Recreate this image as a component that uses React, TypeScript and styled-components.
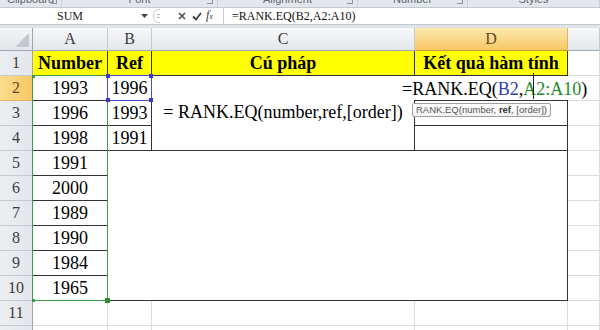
import React from 'react';
import styled, { createGlobalStyle } from 'styled-components';

type Line = 'grid' | 'dark';

const lineColor = (l: Line = 'grid') => (l === 'dark' ? '#333' : '#dadcdd');

const GlobalStyle = createGlobalStyle`
  html, body {
    margin: 0;
    padding: 0;
    background: #fff;
  }
  body {
    width: 600px;
    height: 330px;
    overflow: hidden;
    font-family: "Liberation Serif", serif;
  }
`;

const Window = styled.div`
  width: 600px;
  height: 330px;
  overflow: hidden;
  background: #dfe3e8;
  display: flex;
  flex-direction: column;
`;

const RibbonStrip = styled.div`
  flex: 0 0 7px;
  display: flex;
  overflow: hidden;
  background: #e3e7ec;
  border-bottom: 1px solid #c3c9d1;
`;

const RibbonGroup = styled.div<{ $w: number }>`
  flex: 0 0 ${p => p.$w}px;
  position: relative;
  display: flex;
  justify-content: center;
  border-right: 1px solid #c9ced5;
  box-sizing: border-box;
`;

const RibbonLabel = styled.span`
  font: 11px/12px "Liberation Sans", sans-serif;
  color: #5d6671;
  margin-top: -7px;
`;

const Launcher = styled.span`
  position: absolute;
  right: 4px;
  top: -3px;
  width: 5px;
  height: 6px;
  border-right: 1px solid #8a939e;
  border-bottom: 1px solid #8a939e;
`;

const FormulaBar = styled.div`
  flex: 0 0 16px;
  display: flex;
  align-items: stretch;
  background: #fff;
  border-bottom: 1px solid #c6cbd2;
`;

const NameBox = styled.div`
  flex: 0 0 150px;
  position: relative;
  display: flex;
  align-items: center;
  justify-content: center;
  padding-right: 10px;
  box-sizing: border-box;
  font: 12px/16px "Liberation Serif", serif;
  color: #222;
`;

const DropArrow = styled.svg`
  position: absolute;
  right: 2px;
  top: 6px;
`;

const Grip = styled.div`
  flex: 0 0 16px;
  display: flex;
  align-items: center;
  padding-left: 3px;
`;

const BarButtons = styled.div`
  flex: 0 0 54px;
  display: flex;
  align-items: center;
  padding-left: 5px;
  box-sizing: border-box;
`;

const BarButton = styled.span<{ $w?: number }>`
  flex: 0 0 ${p => p.$w ?? 15}px;
  display: flex;
  align-items: center;
  justify-content: center;
`;

const FxLabel = styled.span`
  font: italic 12px/14px "Liberation Serif", serif;
  color: #3a3a3a;
  margin-left: 2px;

  small {
    font-size: 8px;
  }
`;

const FormulaInput = styled.div`
  flex: 1;
  border-left: 1px solid #c6cbd2;
  padding-left: 8px;
  font: 12px/16px "Liberation Serif", serif;
  color: #111;
`;

const Sheet = styled.div`
  position: relative;
  margin-top: 3px;
  display: grid;
  grid-template-columns: 33px 75px 44px 263px 153px 1fr;
  grid-template-rows: 23px repeat(12, 25px);
  background: #fff;
`;

const Corner = styled.div`
  position: relative;
  background: linear-gradient(#f3f5f7, #e2e6ea);
  border-right: 1px solid #9ea7b1;
  border-bottom: 1px solid #9ea7b1;

  &::after {
    content: '';
    position: absolute;
    right: 3px;
    bottom: 3px;
    border-left: 14px solid transparent;
    border-bottom: 14px solid #c3c8ce;
  }
`;

const ColHead = styled.div<{ $active?: boolean }>`
  display: flex;
  align-items: center;
  justify-content: center;
  background: ${p =>
    p.$active ? 'linear-gradient(#fde9ae, #f7c764)' : 'linear-gradient(#f7f8fa, #e3e6ea)'};
  border-right: 1px solid ${p => (p.$active ? '#e0b45a' : '#c5cad1')};
  border-bottom: 1px solid ${p => (p.$active ? '#c99a3e' : '#9ea7b1')};
  font: 16px/20px "Liberation Serif", serif;
  color: ${p => (p.$active ? '#5e4a24' : '#3c3c3c')};
`;

const RowHead = styled.div<{ $active?: boolean }>`
  display: flex;
  align-items: center;
  justify-content: center;
  background: ${p =>
    p.$active ? 'linear-gradient(90deg, #fbdc8e, #f6c764)' : 'linear-gradient(90deg, #eceff2, #e2e6ea)'};
  border-right: 1px solid ${p => (p.$active ? '#c99a3e' : '#9ea7b1')};
  border-bottom: 1px solid ${p => (p.$active ? '#e0b45a' : '#c5cad1')};
  font: 16px/20px "Liberation Serif", serif;
  color: ${p => (p.$active ? '#5e4a24' : '#3c3c3c')};
`;

const Cell = styled.div<{
  $fill?: string;
  $bold?: boolean;
  $right?: Line;
  $bottom?: Line;
  $cols?: number;
  $rows?: number;
  $middle?: boolean;
}>`
  grid-column: span ${p => p.$cols ?? 1};
  grid-row: span ${p => p.$rows ?? 1};
  background: ${p => p.$fill ?? '#fff'};
  border-right: 1px solid ${p => lineColor(p.$right)};
  border-bottom: 1px solid ${p => lineColor(p.$bottom)};
  display: flex;
  align-items: ${p => (p.$middle ? 'center' : 'flex-end')};
  justify-content: center;
  font: ${p => (p.$bold ? 700 : 400)} 18px/21px "Liberation Serif", serif;
  color: #000;
  white-space: nowrap;
  overflow: hidden;
  padding-bottom: 1px;
  box-sizing: border-box;
`;

const RangeBox = styled.div<{ $color: string }>`
  position: absolute;
  border: 1px solid ${p => p.$color};
  box-sizing: border-box;
  pointer-events: none;
`;

const Handle = styled.span<{ $color: string; $size?: number }>`
  position: absolute;
  width: ${p => p.$size ?? 3}px;
  height: ${p => p.$size ?? 3}px;
  background: ${p => p.$color};
`;

const EditBox = styled.div`
  position: absolute;
  left: 400px;
  top: 48px;
  width: 186px;
  height: 24px;
  background: #fff;
  display: flex;
  align-items: flex-end;
  padding-left: 2px;
  box-sizing: border-box;
  font: 18px/21px "Liberation Serif", serif;
  color: #000;
  white-space: nowrap;
`;

const Ref = styled.span<{ $color: string }>`
  color: ${p => p.$color};
`;

const Caret = styled.span`
  position: relative;
  display: inline-block;
  width: 0;

  &::before {
    content: '';
    position: absolute;
    left: -3px;
    bottom: -4px;
    height: 26px;
    border-left: 1px solid #222;
  }
`;

const Tooltip = styled.div`
  position: absolute;
  left: 412px;
  top: 75px;
  height: 14px;
  padding: 0 3px;
  display: flex;
  align-items: center;
  background: linear-gradient(#ffffff, #f1f1f1);
  border: 1px solid #a0a0a0;
  border-radius: 2px;
  box-sizing: border-box;
  font: 9.5px/12px "Liberation Sans", sans-serif;
  color: #575757;
  white-space: nowrap;

  b {
    color: #333;
  }
`;

const ribbon = [
  { label: 'Clipboard', w: 62 },
  { label: 'Font', w: 156 },
  { label: 'Alignment', w: 140 },
  { label: 'Number', w: 110 },
  { label: 'Styles', w: 132 },
];

const numbers = ['1993', '1996', '1998', '1991', '2000', '1989', '1990', '1984', '1965'];
const refs = ['1996', '1993', '1991'];
const yellow = '#ffff00';

const App = () => {
  return (
    <>
      <GlobalStyle />
      <Window>
        <RibbonStrip>
          {ribbon.map(g => (
            <RibbonGroup key={g.label} $w={g.w}>
              <RibbonLabel>{g.label}</RibbonLabel>
              {g.label !== 'Styles' && <Launcher />}
            </RibbonGroup>
          ))}
        </RibbonStrip>

        <FormulaBar>
          <NameBox>
            SUM
            <DropArrow width="7" height="4" viewBox="0 0 7 4">
              <path d="M0 0 L7 0 L3.5 4 Z" fill="#444" />
            </DropArrow>
          </NameBox>
          <Grip>
            <svg width="10" height="14" viewBox="0 0 10 14">
              <path d="M7 0.5 C2 0.5 0.5 3 0.5 7 C0.5 11 2 13.5 7 13.5" fill="none" stroke="#c3c8ce" />
              <rect x="4" y="5" width="3" height="1" fill="#b5bbc2" />
              <rect x="4" y="8" width="3" height="1" fill="#b5bbc2" />
            </svg>
          </Grip>
          <BarButtons>
            <BarButton>
              <svg width="8" height="8" viewBox="0 0 8 8">
                <path d="M1 1 L7 7 M7 1 L1 7" stroke="#4d4d4d" strokeWidth="1.6" />
              </svg>
            </BarButton>
            <BarButton>
              <svg width="10" height="9" viewBox="0 0 10 9">
                <path d="M1 4.5 L4 7.5 L9 1" fill="none" stroke="#3d3d3d" strokeWidth="1.8" />
              </svg>
            </BarButton>
            <FxLabel>
              f<small>x</small>
            </FxLabel>
          </BarButtons>
          <FormulaInput>=RANK.EQ(B2,A2:A10)</FormulaInput>
        </FormulaBar>

        <Sheet>
          <Corner />
          <ColHead>A</ColHead>
          <ColHead>B</ColHead>
          <ColHead>C</ColHead>
          <ColHead $active>D</ColHead>
          <ColHead />

          <RowHead>1</RowHead>
          <Cell $fill={yellow} $bold $right="dark" $bottom="dark">Number</Cell>
          <Cell $fill={yellow} $bold $right="dark" $bottom="dark">Ref</Cell>
          <Cell $fill={yellow} $bold $right="dark" $bottom="dark">Cú pháp</Cell>
          <Cell $fill={yellow} $bold $right="dark" $bottom="dark">Kết quả hàm tính</Cell>
          <Cell />

          {refs.map((r, i) => (
            <React.Fragment key={`r${i}`}>
              <RowHead $active={i === 0}>{i + 2}</RowHead>
              <Cell $right="dark" $bottom="dark">{numbers[i]}</Cell>
              <Cell $right="dark" $bottom="dark">{r}</Cell>
              {i === 0 && (
                <Cell $rows={3} $middle $right="dark" $bottom="dark">
                  = RANK.EQ(number,ref,[order])
                </Cell>
              )}
              <Cell $right="dark" $bottom="dark" />
              <Cell />
            </React.Fragment>
          ))}

          {numbers.slice(3).map((n, i) => (
            <React.Fragment key={`n${i}`}>
              <RowHead>{i + 5}</RowHead>
              <Cell $right="dark" $bottom="dark">{n}</Cell>
              {i === 0 && <Cell $cols={3} $rows={6} $right="dark" $bottom="dark" />}
              <Cell />
            </React.Fragment>
          ))}

          {[11, 12].map(row => (
            <React.Fragment key={`e${row}`}>
              <RowHead>{row}</RowHead>
              <Cell />
              <Cell />
              <Cell />
              <Cell />
              <Cell />
            </React.Fragment>
          ))}

          <RangeBox $color="#3f9a45" style={{ left: 32, top: 47, width: 76, height: 226 }}>
            <Handle $color="#3f9a45" style={{ left: -1, top: -1 }} />
            <Handle $color="#3f9a45" style={{ left: -1, bottom: -2 }} />
            <Handle $color="#2f8a35" $size={5} style={{ right: -3, bottom: -3 }} />
          </RangeBox>

          <RangeBox $color="#4a4ad0" style={{ left: 107, top: 47, width: 45, height: 26 }}>
            <Handle $color="#3a3ac8" $size={4} style={{ left: -2, top: -2 }} />
            <Handle $color="#3a3ac8" $size={4} style={{ right: -2, top: -2 }} />
            <Handle $color="#3a3ac8" $size={4} style={{ left: -2, bottom: -2 }} />
            <Handle $color="#3a3ac8" $size={4} style={{ right: -2, bottom: -2 }} />
          </RangeBox>

          <EditBox>
            =RANK.EQ(<Ref $color="#2e3fb0">B2</Ref>,<Ref $color="#1f8a2a">A<Caret />2:A10</Ref>)
          </EditBox>

          <Tooltip>
            RANK.EQ(number,&nbsp;<b>ref</b>, [order])
          </Tooltip>
        </Sheet>
      </Window>
    </>
  );
};

export default App;
